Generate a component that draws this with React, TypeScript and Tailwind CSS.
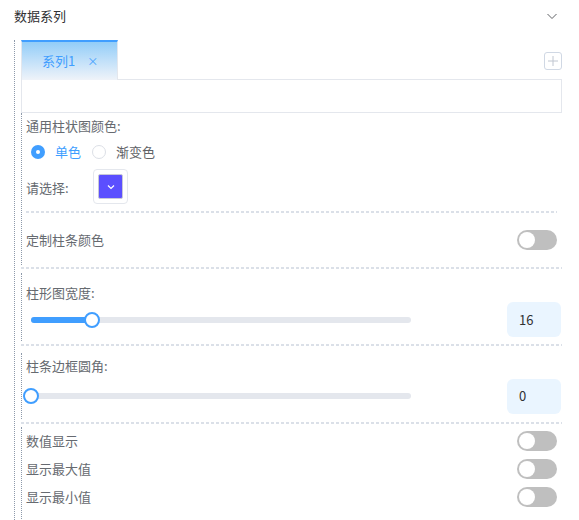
import { useState } from 'react';

const Dashed = ({ className = '' }: { className?: string }) => (
  <div
    className={`h-[2px] bg-[linear-gradient(to_right,#dbe0e8_3px,transparent_3px)] bg-[length:5px_2px] bg-repeat-x ${className}`}
  />
);

const Toggle = ({ on = false }: { on?: boolean }) => (
  <div className={`relative w-[40px] h-[20px] rounded-full shrink-0 ${on ? 'bg-[#409eff]' : 'bg-[#bfbfbf]'}`}>
    <div
      className={`absolute top-[2px] w-[16px] h-[16px] rounded-full bg-white ${on ? 'left-[22px]' : 'left-[2px]'}`}
    />
  </div>
);

const Slider = ({ value, max = 100 }: { value: number; max?: number }) => {
  const pct = (value / max) * 100;
  return (
    <div className="relative ml-[5px] w-[380px] h-[16px] flex items-center">
      <div className="w-full h-[6px] rounded-full bg-[#e4e7ed]" />
      <div className="absolute left-0 h-[6px] rounded-full bg-[#409eff]" style={{ width: `${pct}%` }} />
      <div
        className="absolute w-[16px] h-[16px] -ml-[8px] rounded-full bg-white border-2 border-[#409eff]"
        style={{ left: `${pct}%` }}
      />
    </div>
  );
};

const NumberBox = ({ value }: { value: number }) => (
  <div className="w-[54px] h-[35px] rounded-[6px] bg-[#eaf5ff] flex items-center pl-[12px] text-[13px] text-[#303133]">
    {value}
  </div>
);

const Radio = ({ checked, label }: { checked: boolean; label: string }) => (
  <div className="flex items-center">
    {checked ? (
      <div className="w-[14px] h-[14px] rounded-full bg-[#409eff] flex items-center justify-center">
        <div className="w-[4px] h-[4px] rounded-full bg-white" />
      </div>
    ) : (
      <div className="w-[14px] h-[14px] rounded-full border border-[#dcdfe6] bg-white" />
    )}
    <span className={`ml-[10px] ${checked ? 'text-[#409eff]' : 'text-[#606266]'}`}>{label}</span>
  </div>
);

export default function App() {
  const [mode] = useState<'single' | 'gradient'>('single');

  return (
    <div className="w-[579px] h-[520px] overflow-hidden bg-white font-['Noto_Sans_CJK_SC','Liberation_Sans',sans-serif] text-[13px] text-[#666a70]">
      {/* header */}
      <div className="h-[32px] flex items-center justify-between pl-[14px] pr-[21px]">
        <span className="text-[#303133]">数据系列</span>
        <svg width="12" height="12" viewBox="0 0 12 12" fill="none" stroke="#606266" strokeWidth="1">
          <path d="M1.5 4 L6 8.5 L10.5 4" />
        </svg>
      </div>

      <div className="mt-[8px] ml-[14px] mr-[17px] h-[480px] border-l border-dotted border-[#8e9aab] pl-[6px]">
        {/* tabs */}
        <div className="flex h-[40px]">
          <div className="w-[97px] h-[40px] border-t-2 border-l border-r border-t-[#409eff] border-l-[#e4e7ed] border-r-[#e4e7ed] bg-gradient-to-b from-[#92cdf8] to-[#eff3f9] flex items-center pl-[20px] text-[#409eff]">
            <span>系列1</span>
            <span className="ml-[12px] text-[11px]">×</span>
          </div>
          <div className="flex-1 h-full border-b border-[#e4e7ed] flex items-center justify-end">
            <div className="w-[18px] h-[18px] mb-[-2px] rounded-[3px] border border-[#d0d8e4] flex items-center justify-center">
              <svg width="12" height="12" viewBox="0 0 12 12" stroke="#c0c6d0" strokeWidth="1">
                <path d="M6 1 V11 M1 6 H11" />
              </svg>
            </div>
          </div>
        </div>
        <div className="h-[33px] border-x border-b border-[#e4e7ed]" />

        {/* section 1 */}
        <div className="h-[152px] border-l border-dotted border-[#8e9aab] pl-[4px] pr-[5px]">
          <div className="h-[26px] flex items-center">通用柱状图颜色:</div>
          <div className="h-[26px] flex items-center pl-[5px] gap-[11px]">
            <Radio checked={mode === 'single'} label="单色" />
            <Radio checked={mode === 'gradient'} label="渐变色" />
          </div>
          <div className="mt-[4px] flex items-center">
            <span className="w-[67px] pt-[2px]">请选择:</span>
            <div className="w-[35px] h-[35px] rounded-[4px] border border-[#e4e7ed] p-[4px]">
              <div className="w-full h-full rounded-[2px] bg-[#5b4fff] border border-[#c8c8d8] flex items-center justify-center">
                <svg width="10" height="10" viewBox="0 0 10 10" fill="none" stroke="#fff" strokeWidth="1.2">
                  <path d="M2 3.5 L5 6.5 L8 3.5" />
                </svg>
              </div>
            </div>
          </div>
          <Dashed className="mt-[7px]" />
          <div className="pt-[17px] flex items-center justify-between">
            <span>定制柱条颜色</span>
            <Toggle />
          </div>
        </div>

        <Dashed className="mt-[2px]" />

        {/* section 2 */}
        <div className="mt-[4px] h-[68px] border-l border-dotted border-[#8e9aab] pl-[4px] pr-[1px]">
          <div className="pt-[6px] h-[29px] flex items-end">柱形图宽度:</div>
          <div className="h-[35px] flex items-center justify-between">
            <Slider value={16} />
            <NumberBox value={16} />
          </div>
        </div>

        <Dashed className="mt-[3px]" />

        {/* section 3 */}
        <div className="mt-[7px] h-[66px] border-l border-dotted border-[#8e9aab] pl-[4px] pr-[1px]">
          <div className="pt-[2px] h-[24px] flex items-center">柱条边框圆角:</div>
          <div className="mt-[1px] h-[36px] flex items-center justify-between">
            <Slider value={0} />
            <NumberBox value={0} />
          </div>
        </div>

        <Dashed className="mt-[3px]" />

        {/* section 4 */}
        <div className="mt-[3px] pb-[20px] border-l border-dotted border-[#8e9aab] pl-[4px] pr-[5px]">
          {['数值显示', '显示最大值', '显示最小值'].map((label) => (
            <div key={label} className="h-[28px] flex items-center justify-between">
              <span>{label}</span>
              <Toggle />
            </div>
          ))}
        </div>
      </div>
    </div>
  );
}
